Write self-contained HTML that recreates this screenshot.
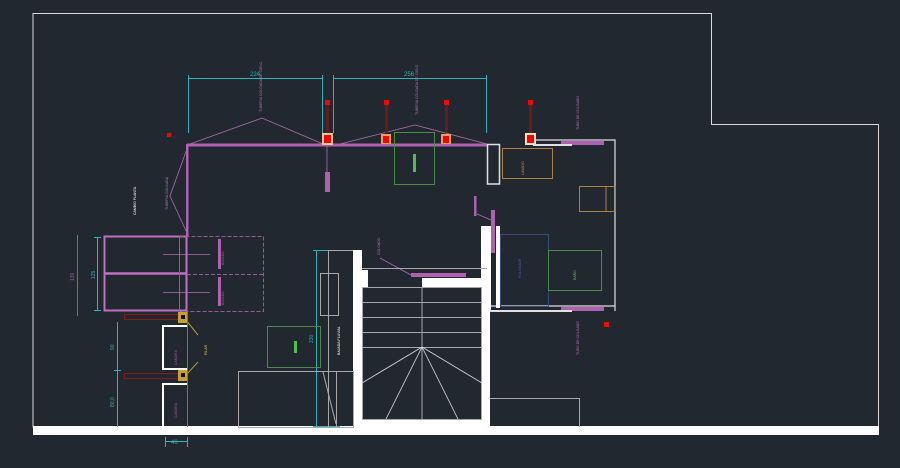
<!DOCTYPE html><html><head><style>html,body{margin:0;padding:0;background:#212830;}svg{display:block}text{font-family:"Liberation Sans",sans-serif}</style></head><body>
<svg width="900" height="468" viewBox="0 0 900 468" xmlns="http://www.w3.org/2000/svg">
<rect width="900" height="468" fill="#212830"/>
<g fill="none" stroke-linecap="square">
<polyline points="33,427 33,13.5 711.5,13.5 711.5,124.5 878.5,124.5 878.5,427" stroke="#d8d8d8" stroke-width="1"/>
</g>
<rect x="33" y="426" width="846" height="9" fill="#fff"/>
<!-- top dimensions -->
<g stroke="#2fb3b8" stroke-width="1" fill="none">
<line x1="188" y1="78.5" x2="323" y2="78.5"/><line x1="188.5" y1="75" x2="188.5" y2="133"/><line x1="322.5" y1="75" x2="322.5" y2="133"/>
<line x1="333" y1="78.5" x2="487" y2="78.5"/><line x1="333.5" y1="75" x2="333.5" y2="133"/><line x1="486.5" y1="75" x2="486.5" y2="133"/>
<line x1="97.5" y1="237" x2="97.5" y2="311"/><line x1="94" y1="237.5" x2="101" y2="237.5"/><line x1="94" y1="310.5" x2="101" y2="310.5"/>
<line x1="117.5" y1="322" x2="117.5" y2="427"/><line x1="114" y1="370.5" x2="121" y2="370.5"/>
<line x1="165.5" y1="437" x2="165.5" y2="447"/><line x1="187.5" y1="437" x2="187.5" y2="447"/><line x1="165" y1="441.5" x2="188" y2="441.5"/>
<line x1="316.5" y1="250" x2="316.5" y2="427"/><line x1="313" y1="250.5" x2="340" y2="250.5"/><line x1="313" y1="426.5" x2="340" y2="426.5"/>
</g>
<g font-size="6" fill="#2fb3b8"><text x="250" y="76">224</text><text x="404" y="76">256</text><text x="171" y="444">40</text></g>
<g fill="#2fb3b8" font-size="5"><text transform="translate(95,279) rotate(-90)">125</text><text transform="translate(114,350) rotate(-90)">90</text><text transform="translate(114,407) rotate(-90)">80,0</text><text transform="translate(313,343) rotate(-90)">230</text></g>
<line x1="77.5" y1="235" x2="77.5" y2="316" stroke="#9a5a9a"/>
<text transform="translate(74,281) rotate(-90)" font-size="5" fill="#9a5a9a">130</text>
<!-- purple walls -->
<g fill="#b060b0">
<rect x="187" y="143.5" width="300" height="3"/>
<rect x="186" y="144" width="2.5" height="93"/>
<rect x="325" y="172" width="5" height="20"/>
<rect x="474" y="196" width="2.5" height="20"/>
<rect x="491" y="210" width="4" height="43"/>
<rect x="561" y="141" width="43" height="4"/>
<rect x="561" y="307" width="43" height="4"/>
<rect x="411" y="273" width="55" height="4"/>
<rect x="218" y="239" width="3" height="30"/><rect x="218" y="277" width="3" height="29"/>
</g>
<rect x="104.5" y="236.5" width="82" height="74" fill="none" stroke="#c070c0" stroke-width="2"/>
<line x1="104" y1="273.5" x2="187" y2="273.5" stroke="#c070c0" stroke-width="2.5"/>
<g stroke="#9a5a9a" fill="none" stroke-dasharray="4,2">
<rect x="179.5" y="236.5" width="84" height="75"/><line x1="187" y1="274.5" x2="263" y2="274.5"/><line x1="179.5" y1="236" x2="179.5" y2="311"/>
</g>
<g stroke="#b070b0" fill="none" stroke-width="0.8">
<line x1="163" y1="254.5" x2="210" y2="254.5"/><line x1="163" y1="292.5" x2="210" y2="292.5"/>
<polyline points="190,144 262,118 323,144"/><polyline points="340,144 415,125 487,144"/>
<polyline points="188,146 170,196 187,233"/>
<line x1="327" y1="146" x2="327" y2="172"/><line x1="477" y1="214" x2="491" y2="220"/><line x1="380" y1="258" x2="411" y2="275"/>
</g>
<!-- red pipes -->
<g>
<rect x="325" y="100" width="5" height="5" fill="#f00"/><rect x="326" y="105" width="3" height="28" fill="#6a1a1a"/>
<rect x="384" y="100" width="5" height="5" fill="#f00"/><rect x="385" y="105" width="3" height="28" fill="#6a1a1a"/>
<rect x="444" y="100" width="5" height="5" fill="#f00"/><rect x="445" y="105" width="3" height="28" fill="#6a1a1a"/>
<rect x="528" y="100" width="5" height="5" fill="#f00"/><rect x="529" y="105" width="3" height="28" fill="#6a1a1a"/>
<rect x="322" y="133" width="11" height="12" fill="#e8c8a0"/><rect x="324" y="135" width="7" height="8" fill="#f00"/>
<rect x="381" y="134" width="10" height="10" fill="#e8a060"/><rect x="383" y="136" width="6" height="7" fill="#f00"/>
<rect x="441" y="134" width="10" height="10" fill="#e8a060"/><rect x="443" y="136" width="6" height="7" fill="#f00"/>
<rect x="525" y="133" width="11" height="12" fill="#f0e0c0"/><rect x="527" y="135" width="7" height="8" fill="#f00"/>
<rect x="167" y="133" width="4" height="4" fill="#f00"/>
<rect x="604" y="322" width="5" height="5" fill="#f00"/>
<rect x="124.5" y="314.5" width="55" height="5" fill="none" stroke="#8a1a1a"/>
<rect x="124.5" y="373.5" width="55" height="5" fill="none" stroke="#8a1a1a"/>
<rect x="178" y="312" width="10" height="11" fill="#c8a030"/><rect x="181" y="315" width="4" height="4" fill="#111"/>
<rect x="178" y="370" width="10" height="11" fill="#c8a030"/><rect x="181" y="373" width="4" height="4" fill="#111"/>
</g>
<g stroke="#d8c040" stroke-width="0.8"><line x1="186" y1="320" x2="198" y2="335"/><line x1="186" y1="375" x2="198" y2="362"/></g>
<!-- small white rooms bottom-left -->
<g fill="none" stroke="#fff" stroke-width="2"><polyline points="188,326 163,326 163,369 188,369"/><polyline points="188,384 163,384 163,427"/></g>
<g stroke="#9a5a9a" fill="none"><line x1="187.5" y1="311" x2="187.5" y2="427"/></g>
<!-- right room -->
<g fill="none" stroke="#e0e0e0" stroke-width="1.2">
<polyline points="536,140 615,140 615,311"/>
<line x1="533" y1="145" x2="572" y2="145" stroke-width="2"/>
<rect x="487.5" y="144.5" width="12" height="39.5" stroke-width="1.5"/>
<line x1="490" y1="306" x2="615" y2="306"/><line x1="490" y1="311" x2="572" y2="311" stroke-width="2"/>
</g>
<rect x="487" y="226" width="4" height="84" fill="#fff"/><rect x="496" y="226" width="4" height="82" fill="#fff"/>
<rect x="491" y="226" width="4" height="27" fill="#b060b0"/>
<g fill="none" stroke-width="1">
<rect x="502.5" y="148.5" width="50" height="30" stroke="#b08040"/>
<rect x="579.5" y="186.5" width="36" height="25" stroke="#b08040"/><line x1="606" y1="186" x2="606" y2="211" stroke="#b08040"/>
<rect x="500.5" y="234.5" width="48" height="72" stroke="#3a4a80"/>
<rect x="548.5" y="250.5" width="53" height="40" stroke="#4a8a4a"/>
<rect x="394.5" y="132.5" width="40" height="52" stroke="#4a8a4a"/>
<rect x="267.5" y="326.5" width="53" height="41" stroke="#4a8a4a"/>
</g>
<rect x="413" y="154" width="3" height="18" fill="#4ec04e"/>
<rect x="294" y="341" width="3" height="12" fill="#4ec04e"/>
<!-- stairs -->
<g fill="#fff">
<rect x="353" y="250" width="9" height="177"/>
<rect x="362" y="270" width="6" height="17"/>
<rect x="422" y="278" width="60" height="9"/>
<rect x="481" y="226" width="9" height="201"/>
<rect x="353" y="419" width="137" height="8"/>
</g>
<g stroke="#a8a8a8" fill="none" stroke-width="1">
<line x1="362" y1="268.5" x2="487" y2="268.5"/>
<rect x="362.5" y="287.5" width="119" height="132"/>
<line x1="362" y1="302.5" x2="482" y2="302.5"/><line x1="362" y1="317.5" x2="482" y2="317.5"/><line x1="362" y1="332.5" x2="482" y2="332.5"/><line x1="362" y1="347.5" x2="482" y2="347.5"/>
<line x1="422" y1="287" x2="422" y2="419"/>
<rect x="238.5" y="371.5" width="115" height="56"/>
<line x1="328.5" y1="250" x2="328.5" y2="427"/>
<line x1="328" y1="250.5" x2="353" y2="250.5"/>
<rect x="320.5" y="273.5" width="18" height="42"/>
<line x1="300" y1="371.5" x2="353" y2="371.5"/>
<line x1="323" y1="372" x2="336" y2="424"/><line x1="336.5" y1="372" x2="336.5" y2="427"/>
<polyline points="490,398.5 579.5,398.5 579.5,427"/>
</g>
<g stroke="#ddd" stroke-width="0.8"><line x1="422" y1="347" x2="362" y2="383"/><line x1="422" y1="347" x2="386" y2="419"/><line x1="422" y1="347" x2="458" y2="419"/><line x1="422" y1="347" x2="482" y2="383"/></g>
<!-- tiny rotated labels -->
<g font-size="3.5">
<text transform="translate(262,112) rotate(-90)" fill="#b070b0">TUBERIA COLGADA DE CIELO</text>
<text transform="translate(418,115) rotate(-90)" fill="#b070b0">TUBERIA COLGADA DE CIELO</text>
<text transform="translate(579,130) rotate(-90)" fill="#b070b0">TUBO DE COLGADO</text>
<text transform="translate(579,355) rotate(-90)" fill="#b070b0">TUBO DE COLGADO</text>
<text transform="translate(168,210) rotate(-90)" fill="#b070b0">TUBERIA COLGADA</text>
<text transform="translate(380,255) rotate(-90)" fill="#b070b0">COLGADO</text>
<text transform="translate(136,215) rotate(-90)" fill="#fff">CAMBIO PLANTA</text>
<text transform="translate(340,355) rotate(-90)" fill="#fff">BAJADA PLUVIAL</text>
<text transform="translate(207,355) rotate(-90)" fill="#e0d040">PILAR</text>
<text transform="translate(177,365) rotate(-90)" fill="#9a5a9a">CAMARA</text>
<text transform="translate(177,418) rotate(-90)" fill="#9a5a9a">CAMARA</text>
<text transform="translate(524,175) rotate(-90)" fill="#c09050">LAVADO</text>
<text transform="translate(521,278) rotate(-90)" fill="#4a5aa0">PULSADOR</text>
<text transform="translate(576,280) rotate(-90)" fill="#4ec04e">BAÑO</text>
<text transform="translate(224,265) rotate(-90)" fill="#9a5a9a">BAJADA</text>
<text transform="translate(224,305) rotate(-90)" fill="#9a5a9a">BAJADA</text>
</g>
</svg>
</body></html>
